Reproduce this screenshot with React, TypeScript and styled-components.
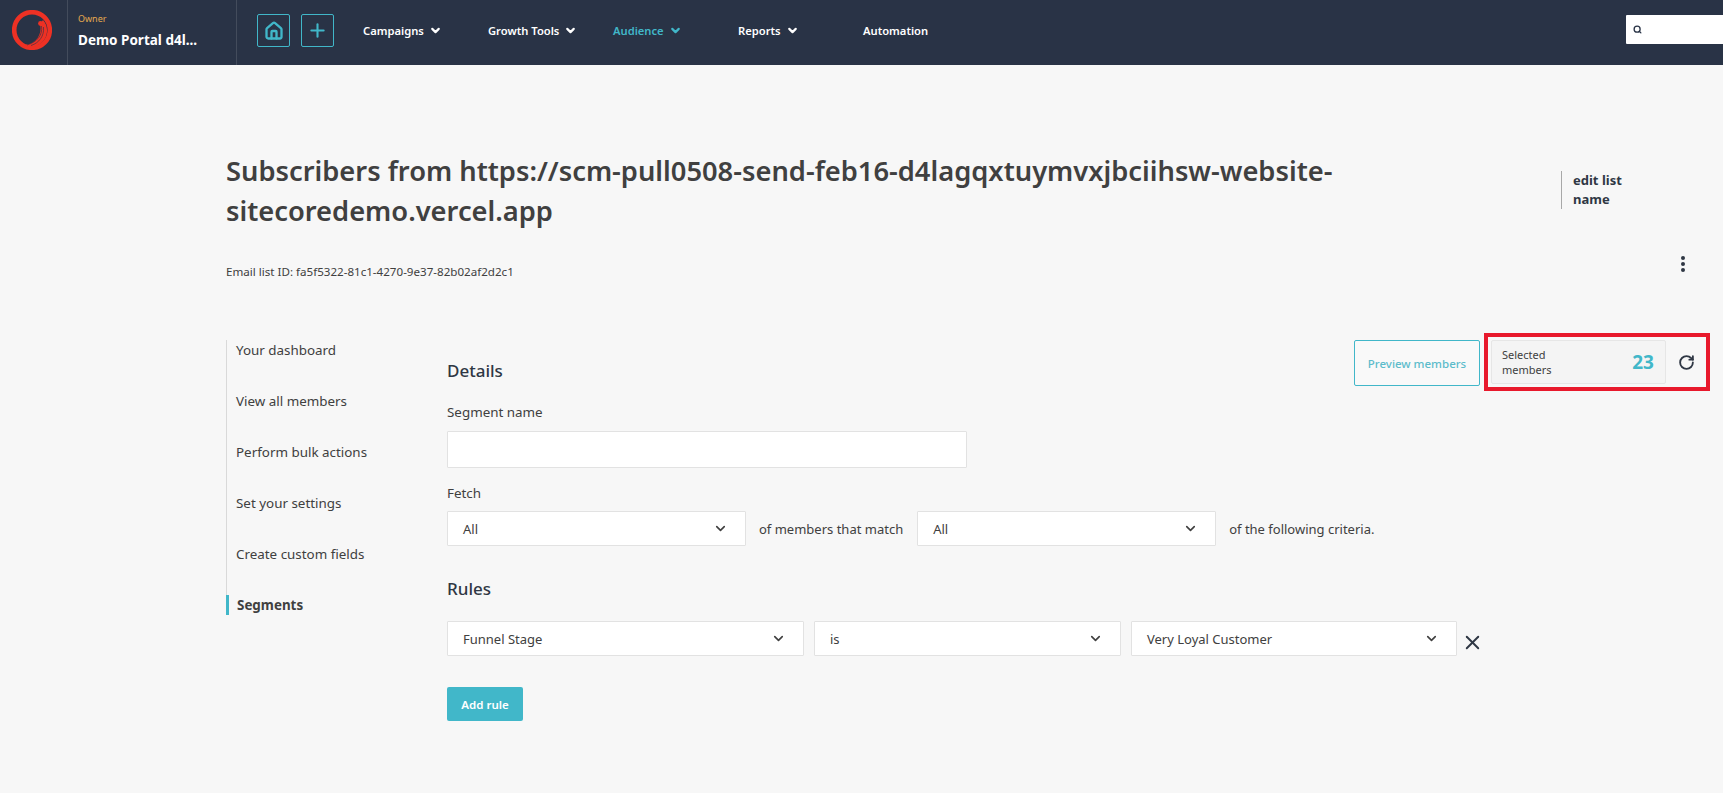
import { ChevronDown, House, Plus, RotateCw, Search, X } from 'lucide-react'
import styled, { createGlobalStyle } from 'styled-components'

const GlobalStyle = createGlobalStyle`
  html, body {
    margin: 0;
    padding: 0;
    height: 100%;
    overflow: hidden;
    background: #f7f7f7;
    font-family: 'Noto Sans', 'Open Sans', sans-serif;
    color: #404040;
  }
  * {
    box-sizing: border-box;
  }
`

const teal = '#41b7c9'
const navy = '#293346'

const Header = styled.header`
  display: flex;
  align-items: stretch;
  height: 65px;
  background: ${navy};
`

const LogoCell = styled.div`
  width: 68px;
  flex: none;
  display: flex;
  align-items: flex-start;
  padding: 10px 0 0 12px;
  border-right: 1px solid #434c5c;
`

const PortalCell = styled.div`
  width: 169px;
  flex: none;
  padding: 11px 0 0 10px;
  border-right: 1px solid #434c5c;
`

const Owner = styled.div`
  font-size: 9px;
  line-height: 15px;
  color: #e5a94f;
`

const PortalName = styled.div`
  margin-top: 4px;
  font-size: 13.5px;
  line-height: 20px;
  font-weight: 700;
  color: #fff;
`

const QuickActions = styled.div`
  display: flex;
  gap: 11px;
  padding: 14px 0 0 20px;
  width: 126px;
  flex: none;
`

const QuickButton = styled.button`
  width: 33px;
  height: 33px;
  padding: 0;
  display: flex;
  align-items: center;
  justify-content: center;
  background: none;
  border: 1px solid ${teal};
  border-radius: 2px;
  color: ${teal};
`

const Nav = styled.nav`
  display: flex;
  flex: 1;
`

const NavItem = styled.a<{ $active?: boolean }>`
  width: 125px;
  flex: none;
  display: flex;
  align-items: flex-start;
  gap: 5px;
  padding-top: 22px;
  font-size: 11.2px;
  line-height: 18px;
  font-weight: 600;
  color: ${({ $active }) => ($active ? teal : '#fff')};

  svg {
    margin-top: 2px;
  }
`

const SearchBox = styled.div`
  width: 97px;
  height: 29px;
  margin-top: 15px;
  flex: none;
  display: flex;
  align-items: center;
  padding-left: 7px;
  background: #fff;
  border-radius: 1px 0 0 1px;
  color: #293346;
`

const Page = styled.main`
  padding: 86px 13px 0 226px;
`

const TitleRow = styled.div`
  display: flex;
  justify-content: space-between;
`

const Title = styled.h1`
  width: 1150px;
  margin: 0;
  font-size: 27.3px;
  line-height: 40px;
  font-weight: 600;
  color: #404040;
`

const EditLink = styled.div`
  width: 90px;
  height: 38px;
  margin: 20px 59px 0 0;
  padding-left: 11px;
  border-left: 1px solid #a8a8a8;
  font-size: 13px;
  line-height: 19px;
  font-weight: 700;
  color: #2f3744;
`

const IdRow = styled.div`
  display: flex;
  justify-content: space-between;
  align-items: flex-start;
  margin-top: 20px;
  padding-right: 25px;
`

const ListId = styled.div`
  margin-top: 13px;
  font-size: 11.6px;
  line-height: 16px;
`

const Dots = styled.div`
  display: flex;
  flex-direction: column;
  gap: 2px;
  padding-top: 5px;

  i {
    width: 4px;
    height: 4px;
    border-radius: 50%;
    background: #2f3744;
  }
`

const Columns = styled.div`
  display: flex;
  margin-top: 53px;
`

const SideMenu = styled.ul`
  width: 221px;
  flex: none;
  height: 275px;
  margin: 7px 0 0;
  padding: 0;
  list-style: none;
  border-left: 1px solid #d9d9d9;
`

const SideItem = styled.li<{ $active?: boolean }>`
  position: relative;
  height: 51px;
  padding: 0 0 0 ${({ $active }) => ($active ? 10 : 9)}px;
  font-size: 13.4px;
  line-height: 20px;
  font-weight: ${({ $active }) => ($active ? 700 : 400)};

  &::before {
    content: '';
    display: ${({ $active }) => ($active ? 'block' : 'none')};
    position: absolute;
    left: -1px;
    top: 0;
    width: 3px;
    height: 20px;
    background: ${teal};
  }
`

const Form = styled.div`
  flex: 1;
`

const FormTop = styled.div`
  display: flex;
  justify-content: space-between;
  align-items: flex-start;
`

const Heading = styled.h2<{ $rules?: boolean }>`
  margin: ${({ $rules }) => ($rules ? '31px 0 20px' : '26px 0 0')};
  font-size: 17px;
  line-height: 24px;
  font-weight: 500;
  color: #2f3744;
`

const Toolbar = styled.div`
  display: flex;
  align-items: flex-start;
  gap: 4px;
`

const PreviewButton = styled.button`
  width: 126px;
  height: 46px;
  margin-top: 7px;
  padding: 0;
  background: #f9f9f9;
  border: 1px solid ${teal};
  border-radius: 2px;
  font: 500 11.5px 'Noto Sans', sans-serif;
  color: #5cbccb;
`

const Highlight = styled.div`
  width: 226px;
  height: 58px;
  display: flex;
  align-items: center;
  padding-left: 3px;
  border: 4px solid #e8192c;
`

const MembersBox = styled.div`
  width: 175px;
  height: 44px;
  display: flex;
  align-items: center;
  justify-content: space-between;
  padding: 0 11px 0 10px;
  background: #f4f4f4;
  border: 1px solid #e6e6e6;
  border-radius: 2px;
`

const MembersLabel = styled.div`
  width: 70px;
  font-size: 11px;
  line-height: 15px;
`

const MembersCount = styled.div`
  font-size: 19px;
  font-weight: 700;
  color: ${teal};
`

const RefreshButton = styled.div`
  flex: 1;
  display: flex;
  justify-content: center;
  color: #2f3744;
`

const Label = styled.div<{ $first?: boolean }>`
  margin: ${({ $first }) => ($first ? '11px 0 9px' : '15px 0 8px')};
  font-size: 13.4px;
  line-height: 20px;
  font-weight: 400;
`

const TextInput = styled.div`
  width: 520px;
  height: 37px;
  background: #fff;
  border: 1px solid #e2e2e2;
  border-radius: 1px;
`

const Row = styled.div`
  display: flex;
  align-items: center;
`

const Select = styled.div<{ $width: number; $gap?: number }>`
  width: ${({ $width }) => $width}px;
  height: 35px;
  margin-right: ${({ $gap }) => $gap ?? 0}px;
  flex: none;
  display: flex;
  align-items: center;
  justify-content: space-between;
  padding: 0 17px 0 15px;
  background: #fff;
  border: 1px solid #e2e2e2;
  border-radius: 1px;
  font-size: 13px;
`

const Joiner = styled.span`
  margin: 0 14px 0 13px;
  font-size: 13px;
  white-space: nowrap;
`

const RemoveRule = styled.span`
  display: flex;
  margin: 7px 0 0 4px;
  color: #2f3744;
`

const AddRule = styled.button`
  width: 76px;
  height: 34px;
  margin-top: 31px;
  padding: 0;
  background: ${teal};
  border: none;
  border-radius: 2px;
  font: 600 11.5px 'Noto Sans', sans-serif;
  color: #fff;
`

const Logo = () => (
  <svg width="40" height="40" viewBox="0 0 40 40" fill="none">
    <circle cx="20" cy="20" r="17.8" stroke="#ee3124" strokeWidth="4.6" />
    <path d="M31 10A16 16 0 0 1 12 35C22 35 31 26 28 14Z" fill="#ee3124" />
    <path d="M29.500 16C31 25 25 32 15 35" stroke={navy} strokeWidth="0.6" />
    <path d="M31.500 17C32.500 26 27 33 19 35.500" stroke={navy} strokeWidth="0.6" />
    <circle cx="28.500" cy="13.500" r="2.400" fill="#ee3124" />
  </svg>
)

const Chevron = () => <ChevronDown size={15} strokeWidth={2.6} color="#404040" />

const navItems = ['Campaigns', 'Growth Tools', 'Audience', 'Reports', 'Automation']
const sideItems = [
  'Your dashboard',
  'View all members',
  'Perform bulk actions',
  'Set your settings',
  'Create custom fields',
  'Segments',
]

export default function App() {
  return (
    <>
      <GlobalStyle />
      <Header>
        <LogoCell>
          <Logo />
        </LogoCell>
        <PortalCell>
          <Owner>Owner</Owner>
          <PortalName>Demo Portal d4l...</PortalName>
        </PortalCell>
        <QuickActions>
          <QuickButton>
            <House size={20} strokeWidth={2.8} />
          </QuickButton>
          <QuickButton>
            <Plus size={21} strokeWidth={2.4} />
          </QuickButton>
        </QuickActions>
        <Nav>
          {navItems.map((item) => (
            <NavItem key={item} $active={item === 'Audience'}>
              {item}
              {item !== 'Automation' && <ChevronDown size={13} strokeWidth={4} />}
            </NavItem>
          ))}
        </Nav>
        <SearchBox>
          <Search size={9} strokeWidth={3.5} />
        </SearchBox>
      </Header>
      <Page>
        <TitleRow>
          <Title>
            Subscribers from https://scm-pull0508-send-feb16-d4lagqxtuymvxjbciihsw-website-sitecoredemo.vercel.app
          </Title>
          <EditLink>edit list name</EditLink>
        </TitleRow>
        <IdRow>
          <ListId>Email list ID: fa5f5322-81c1-4270-9e37-82b02af2d2c1</ListId>
          <Dots>
            <i />
            <i />
            <i />
          </Dots>
        </IdRow>
        <Columns>
          <SideMenu>
            {sideItems.map((item) => (
              <SideItem key={item} $active={item === 'Segments'}>
                {item}
              </SideItem>
            ))}
          </SideMenu>
          <Form>
            <FormTop>
              <Heading>Details</Heading>
              <Toolbar>
                <PreviewButton>Preview members</PreviewButton>
                <Highlight>
                  <MembersBox>
                    <MembersLabel>Selected members</MembersLabel>
                    <MembersCount>23</MembersCount>
                  </MembersBox>
                  <RefreshButton>
                    <RotateCw size={17} strokeWidth={2.6} />
                  </RefreshButton>
                </Highlight>
              </Toolbar>
            </FormTop>
            <Label $first>Segment name</Label>
            <TextInput />
            <Label>Fetch</Label>
            <Row>
              <Select $width={299}>
                All
                <Chevron />
              </Select>
              <Joiner>of members that match</Joiner>
              <Select $width={299}>
                All
                <Chevron />
              </Select>
              <Joiner>of the following criteria.</Joiner>
            </Row>
            <Heading $rules>Rules</Heading>
            <Row>
              <Select $width={357} $gap={10}>
                Funnel Stage
                <Chevron />
              </Select>
              <Select $width={307} $gap={10}>
                is
                <Chevron />
              </Select>
              <Select $width={326}>
                Very Loyal Customer
                <Chevron />
              </Select>
              <RemoveRule>
                <X size={23} strokeWidth={2} />
              </RemoveRule>
            </Row>
            <AddRule>Add rule</AddRule>
          </Form>
        </Columns>
      </Page>
    </>
  )
}
